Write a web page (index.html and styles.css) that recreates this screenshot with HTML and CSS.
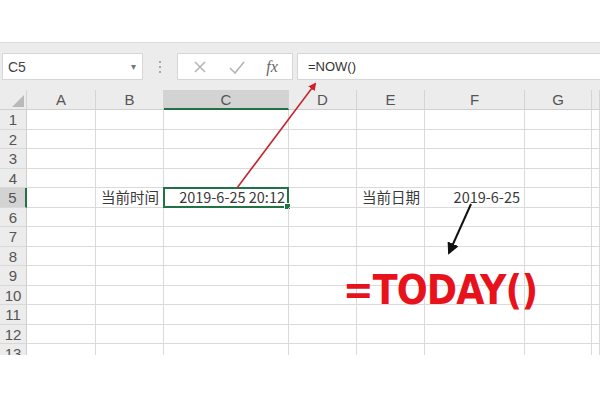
FILE: index.html
```html
<!DOCTYPE html>
<html>
<head>
<meta charset="utf-8">
<link rel="stylesheet" href="styles.css">
</head>
<body>
<div class="page">
  <div class="topspace"></div>
  <div class="fbar">
    <div class="namebox"><span>C5</span><span class="caret">▾</span></div>
    <div class="dots"><i></i><i></i><i></i></div>
    <div class="btns">
      <svg class="ic" width="16" height="16" viewBox="0 0 16 16"><path d="M3 3 L13 13 M13 3 L3 13" stroke="#b5b5b5" stroke-width="1.6" fill="none"/></svg>
      <svg class="ic" width="18" height="16" viewBox="0 0 18 16"><path d="M2 9 L7 14 L16 3" stroke="#b5b5b5" stroke-width="1.6" fill="none"/></svg>
      <span class="fx">fx</span>
    </div>
    <div class="input">=NOW()</div>
  </div>
  <div class="grid">
    <div class="corner"><svg width="12" height="12" viewBox="0 0 12 12"><path d="M12 0 L12 12 L0 12 Z" fill="#b9b9b9"/></svg></div>
    <div class="ch">A</div><div class="ch">B</div><div class="ch sel">C</div><div class="ch">D</div><div class="ch">E</div><div class="ch">F</div><div class="ch">G</div><div class="ch"></div>
  </div>
  <div class="grid body" id="rows"></div>
  <svg class="arrows" width="600" height="400" viewBox="0 0 600 400">
    <defs>
      <marker id="ar" markerWidth="8" markerHeight="8" refX="6" refY="4" orient="auto" markerUnits="userSpaceOnUse">
        <path d="M0 0 L8 4 L0 8 Z" fill="#d0202a"/>
      </marker>
      <marker id="ab" markerWidth="12" markerHeight="12" refX="10" refY="6" orient="auto" markerUnits="userSpaceOnUse">
        <path d="M0 0 L12 6 L0 12 Z" fill="#111"/>
      </marker>
    </defs>
    <line x1="237" y1="188" x2="315" y2="84" stroke="#c4262e" stroke-width="1.6" marker-end="url(#ar)"/>
    <line x1="471" y1="204" x2="449" y2="253" stroke="#111" stroke-width="2" marker-end="url(#ab)"/>
  </svg>
  <div class="today">=TODAY()</div>
</div>
<script src="grid.js"></script>
</body>
</html>
```
FILE: grid.js
```js
(function(){
  var rows = document.getElementById('rows');
  var html = '';
  for (var r = 1; r <= 13; r++) {
    var cls = r === 13 ? ' part' : '';
    html += '<div class="rh' + (r === 5 ? ' rsel' : '') + cls + '">' + r + '</div>';
    for (var c = 0; c < 8; c++) {
      var txt = '', extra = '';
      if (r === 5) {
        if (c === 1) { txt = '当前时间'; extra = ' right'; }
        if (c === 2) { txt = '2019-6-25 20:12'; extra = ' right active'; }
        if (c === 4) { txt = '当前日期'; extra = ' left'; }
        if (c === 5) { txt = '2019-6-25'; extra = ' right'; }
      }
      html += '<div class="cell' + extra + cls + '">' + txt + (extra.indexOf('active') >= 0 ? '<b class="handle"></b>' : '') + '</div>';
    }
  }
  rows.innerHTML = html;
})();
```
FILE: styles.css
```css
html, body { margin: 0; padding: 0; background: #fff; }
.page {
  position: relative;
  width: 600px;
  height: 400px;
  overflow: hidden;
  font-family: "Liberation Sans", Arial, "Noto Sans CJK SC", sans-serif;
  color: #333;
}
.topspace { height: 42px; background: #fff; }
.fbar {
  height: 48px;
  background: #ececec;
  border-top: 1px solid #dcdcdc;
  box-sizing: border-box;
  display: flex;
  align-items: flex-start;
  padding-top: 10px;
  padding-left: 2px;
}
.namebox {
  width: 141px;
  height: 27px;
  background: #fff;
  border: 1px solid #d6d6d6;
  box-sizing: border-box;
  display: flex;
  align-items: center;
  justify-content: space-between;
  padding: 0 6px 0 5px;
  font-size: 14px;
  color: #444;
}
.caret { font-size: 10px; color: #777; }
.dots {
  width: 34px;
  height: 27px;
  display: flex;
  flex-direction: column;
  align-items: center;
  justify-content: center;
  gap: 3px;
}
.dots i { display: block; width: 2px; height: 2px; background: #a8a8a8; }
.btns {
  width: 116px;
  height: 27px;
  background: #fff;
  border: 1px solid #d6d6d6;
  box-sizing: border-box;
  display: flex;
  align-items: center;
  justify-content: space-around;
  padding: 0 4px;
}
.fx {
  font-family: "Liberation Serif", serif;
  font-style: italic;
  font-size: 16px;
  color: #666;
}
.input {
  flex: 1;
  margin-left: 4px;
  height: 27px;
  background: #fff;
  border: 1px solid #d6d6d6;
  border-right: none;
  box-sizing: border-box;
  padding-left: 10px;
  font-size: 13px;
  line-height: 25px;
  color: #333;
}
.grid {
  display: grid;
  grid-template-columns: 27px 69px 68px 125px 68px 68px 100px 67px 1fr;
}
.corner, .ch {
  height: 20px;
  background: #ececec;
  border-bottom: 1px solid #cfcfcf;
  border-right: 1px solid #d4d4d4;
  box-sizing: border-box;
  font-size: 15px;
  line-height: 20px;
  text-align: center;
  color: #555;
}
.corner { display: flex; align-items: flex-end; justify-content: flex-end; padding: 0 2px 2px 0; }
.ch.sel { background: #d3d3d3; border-bottom: 2px solid #217346; }
.body { grid-auto-rows: 19.5px; }
.rh {
  background: #ececec;
  border-right: 1px solid #cfcfcf;
  border-bottom: 1px solid #d9d9d9;
  box-sizing: border-box;
  font-size: 15px;
  line-height: 19px;
  text-align: center;
  color: #555;
}
.rh.rsel { background: #d3d3d3; border-right: 2px solid #217346; }
.cell {
  position: relative;
  border-right: 1px solid #dadada;
  border-bottom: 1px solid #dadada;
  box-sizing: border-box;
  font-family: "Noto Sans CJK SC", "Noto Sans", sans-serif;
  font-size: 14.5px;
  line-height: 18px;
  white-space: nowrap;
  color: #3a3a3a;
}
.part { height: 11px; overflow: hidden; border-bottom: none; line-height: 19px; }
.right { text-align: right; padding-right: 4px; }
.left { text-align: left; padding-left: 5px; }
.active { border: 2px solid #217346; margin: -1px 0 0 -1px; line-height: 16px; padding-right: 2px; }
.handle {
  position: absolute;
  right: -4px;
  bottom: -4px;
  width: 5px;
  height: 5px;
  background: #217346;
  border: 1px solid #fff;
}
.arrows { position: absolute; left: 0; top: 0; pointer-events: none; }
.today {
  position: absolute;
  left: 343px;
  top: 266px;
  font-family: "DejaVu Sans", sans-serif;
  font-weight: bold;
  font-size: 41px;
  color: #e8121c;
  letter-spacing: -1px;
  transform: scaleX(0.89);
  transform-origin: left top;
}
```
